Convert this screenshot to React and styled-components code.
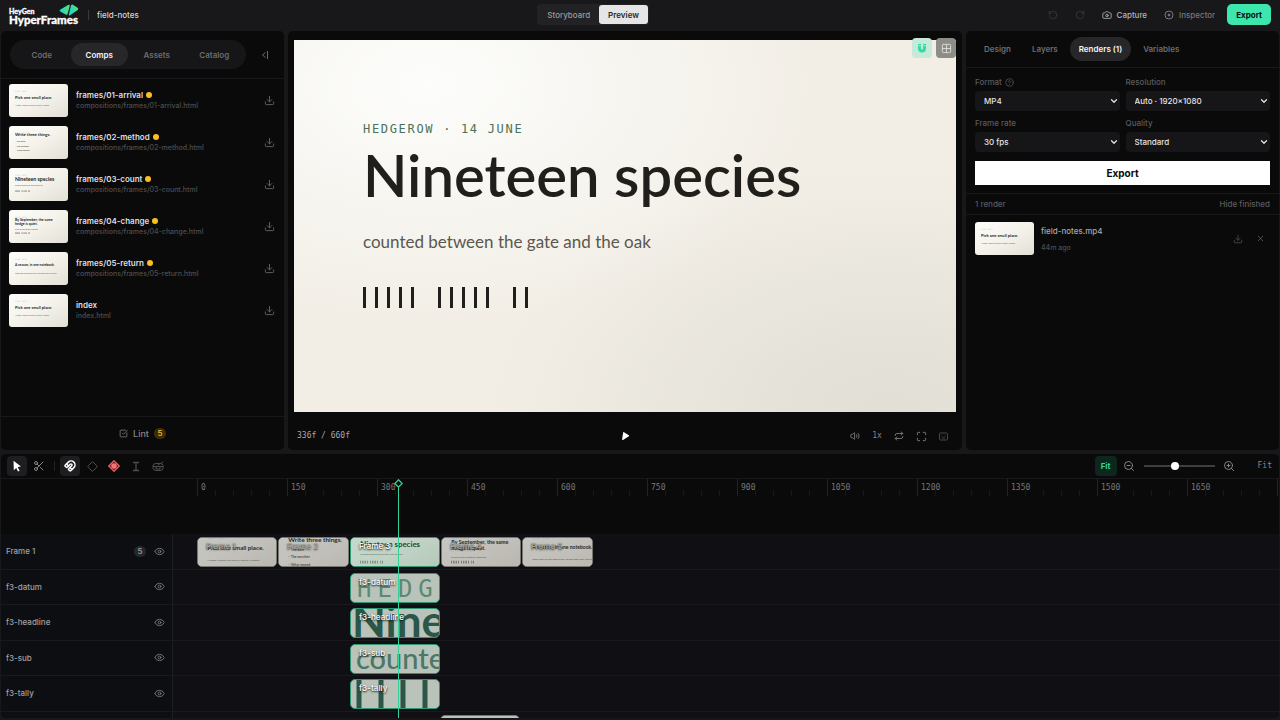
import React, {useState} from 'react'
import styled, {createGlobalStyle} from 'styled-components'
import {
    Camera, CircleHelp, ChevronDown, Download, X, Scissors, Magnet, Diamond,
    Volume2, Repeat, Maximize, Eye, ZoomIn, ZoomOut, RotateCcw, RotateCw, SquareCheckBig, Grid2x2
} from 'lucide-react'

const GlobalStyle = createGlobalStyle`
  * { box-sizing: border-box; }
  body {
    margin: 0;
    background: #18181a;
    color: #d4d4d8;
    font: 500 8px/12px Inter, "Liberation Sans", sans-serif;
  }
  button, select, input { font: inherit; color: inherit; }
  button { border: 0; padding: 0; background: none; cursor: pointer; }
  svg { display: block; flex-shrink: 0; }
`

const MONO = '"DejaVu Sans Mono", "Liberation Mono", monospace'
const FRAME_PX = 0.6

const Page = styled.div`
  display: flex;
  flex-direction: column;
  height: 100vh;
  padding: 0 1px 2px;
  overflow: hidden;
`
const Header = styled.header`
  display: flex;
  justify-content: space-between;
  align-items: center;
  height: 31px;
  flex-shrink: 0;
  padding: 0 8px 2px 7px;
`
const HeaderGroup = styled.div`
  display: flex;
  align-items: center;
  gap: ${p => p.$gap}px;
`
const Rule = styled.span`
  width: 1px;
  height: 10px;
  background: #3a3a3d;
`
const ToolRule = styled(Rule)`
  margin: 0 3px;
  background: #232326;
`
const Switch = styled.div`
  display: flex;
  padding: 1px;
  border-radius: 4px;
  background: #222224;
`
const SwitchButton = styled.button`
  height: 19px;
  padding: 0 9px;
  border-radius: 3px;
  font-weight: ${p => p.$active ? 600 : 500};
  color: ${p => p.$active ? '#27272a' : '#9a9a9f'};
  background: ${p => p.$active ? '#e5e5e5' : 'transparent'};
`
const HeaderAction = styled.button`
  display: flex;
  align-items: center;
  gap: 5px;
  color: ${p => p.$color};
`
const ExportButton = styled.button`
  height: 21px;
  padding: 0 9px;
  border-radius: 5px;
  background: #3ce6ac;
  color: #0a0a0a;
  font-weight: 700;
`
const Workspace = styled.main`
  display: flex;
  flex: 1;
  min-height: 0;
  gap: 4px;
`
const Panel = styled.section`
  display: flex;
  flex-direction: column;
  width: ${p => p.$width || 'auto'};
  flex: ${p => p.$width ? 'none' : 1};
  min-width: 0;
  border-radius: 5px;
  background: #0a0a0a;
  overflow: hidden;
`
const TabBar = styled.div`
  display: flex;
  align-items: center;
  flex-shrink: 0;
  height: ${p => p.$h}px;
  padding: 0 9px;
  gap: ${p => p.$gap || 0}px;
  border-bottom: 1px solid #18181b;
`
const Pills = styled.div`
  display: grid;
  grid-template-columns: repeat(4, 1fr);
  flex: 1;
  padding: 3px;
  border-radius: 15px;
  background: #161618;
`
const Tab = styled.button`
  height: ${p => p.$h || 23}px;
  padding: 0 ${p => p.$pad || 0}px;
  border-radius: 12px;
  font-weight: 600;
  color: ${p => p.$active ? '#f4f4f5' : '#6c6c71'};
  background: ${p => p.$active ? '#27272a' : 'transparent'};
`
const IconButton = styled.button`
  display: grid;
  place-items: center;
  width: 20px;
  height: 20px;
  border-radius: 4px;
  color: ${p => p.$color || '#66666b'};
  background: ${p => p.$bg || 'transparent'};
`
const CompList = styled.ul`
  flex: 1;
  margin: 0;
  padding: 0;
  list-style: none;
`
const CompRow = styled.li`
  display: flex;
  align-items: center;
  gap: 8px;
  height: 42px;
  padding: 0 5px 0 8px;
`
const Thumb = styled.svg`
  width: 59px;
  height: 33px;
  border-radius: 3px;
`
const CompText = styled.div`
  flex: 1;
  min-width: 0;
`
const CompName = styled.div`
  display: flex;
  align-items: center;
  gap: 3px;
  font-weight: 600;
  color: #dedee1;
`
const Dot = styled.span`
  width: 6px;
  height: 6px;
  border-radius: 50%;
  background: #fbbf24;
`
const Faint = styled.div`
  font-size: 7px;
  line-height: 10px;
  color: #4c4c50;
`
const LintBar = styled.footer`
  display: flex;
  justify-content: center;
  align-items: center;
  height: 34px;
  border-top: 1px solid #18181b;
`
const LintButton = styled.button`
  display: flex;
  align-items: center;
  gap: 5px;
  font-size: 9px;
  color: #85858a;
`
const Count = styled.span`
  width: 12px;
  border-radius: 6px;
  font-size: 8px;
  line-height: 11px;
  text-align: center;
  color: ${p => p.$warn ? '#fbbf24' : '#a1a1a6'};
  background: ${p => p.$warn ? '#3f2c0b' : '#27272a'};
`
const Stage = styled.div`
  position: relative;
  flex: 1;
  margin: 9px 6px 0;
  padding: 82px 69px 0;
  background:
    radial-gradient(ellipse 60% 65% at 20% 12%, #fdfdfc 0%, rgba(250, 250, 247, 0.8) 35%, transparent 100%),
    radial-gradient(ellipse 60% 65% at 90% 100%, #e1dfd6 0%, #e5e2da 30%, transparent 100%),
    #f2eee6;
  color: #211f1b;
`
const StageTools = styled.div`
  position: absolute;
  top: -2px;
  right: 0;
  display: flex;
  gap: 4px;
`
const Datum = styled.p`
  margin: 0;
  font: 400 12px/14px ${MONO};
  letter-spacing: 0.14em;
  color: #4b7259;
`
const Headline = styled.h1`
  margin: 4px 0 0;
  font: 600 58px/70px Lato, sans-serif;
`
const Sub = styled.p`
  margin: 22px 0 0;
  font: 400 17px/20px Lato, sans-serif;
  color: #5b574f;
`
const Tally = styled.div`
  display: flex;
  gap: 24px;
  margin-top: 35px;
`
const TallyGroup = styled.div`
  display: flex;
  gap: 9px;
`
const TallyMark = styled.span`
  width: 3px;
  height: 21px;
  background: #211f1b;
`
const Transport = styled.div`
  display: grid;
  grid-template-columns: 1fr auto 1fr;
  align-items: center;
  height: 38px;
  padding: 10px 9px 0 9px;
`
const Timecode = styled.span`
  font: 400 8px/12px ${MONO};
  color: ${p => p.$dim ? '#85858a' : '#a8a8ad'};
`
const IconRow = styled.div`
  display: flex;
  justify-content: flex-end;
  gap: 2px;
`
const Form = styled.form`
  display: grid;
  grid-template-columns: 1fr 1fr;
  gap: 7px 6px;
  padding: 9px 9px 8px;
  border-bottom: 1px solid #18181b;
`
const Field = styled.label`
  display: grid;
  gap: 4px;
  color: #5a5a5f;
`
const FieldName = styled.span`
  display: flex;
  align-items: center;
  gap: 3px;
  height: 10px;
`
const SelectBox = styled.span`
  display: grid;
  align-items: center;
  color: #e4e4e7;

  select, svg { grid-area: 1 / 1; }
  svg { justify-self: end; margin-right: 1px; pointer-events: none; }
  select {
    appearance: none;
    width: 100%;
    height: 20px;
    padding: 0 9px;
    border: 0;
    border-radius: 4px;
    background: #161618;
  }
`
const WideExport = styled.button`
  grid-column: 1 / -1;
  height: 24px;
  margin-top: 2px;
  background: #fff;
  color: #0a0a0a;
  font-size: 10px;
  font-weight: 700;
`
const RenderHead = styled.div`
  display: flex;
  align-items: center;
  justify-content: space-between;
  height: 21px;
  padding: 0 9px;
  border-bottom: 1px solid #18181b;
  color: #5a5a5f;
`
const RenderRow = styled.div`
  display: flex;
  align-items: center;
  gap: 7px;
  padding: 7px 9px;
`
const RenderText = styled.div`
  display: grid;
  gap: 6px;
  flex: 1;
  color: #a8a8ad;
`
const TimelinePanel = styled.section`
  display: flex;
  flex-direction: column;
  height: 264px;
  flex-shrink: 0;
  margin-top: 4px;
  border-radius: 5px;
  background: #0a0a0a;
  overflow: hidden;
`
const Toolbar = styled.div`
  display: flex;
  align-items: center;
  gap: 2px;
  height: 25px;
  flex-shrink: 0;
  padding: 0 7px 0 6px;
  border-bottom: 1px solid #18181b;
`
const Spacer = styled.span`
  flex: 1;
`
const FitButton = styled.button`
  width: 22px;
  height: 20px;
  border-radius: 4px;
  background: #0d261e;
  color: #34d399;
  font-weight: 700;
`
const ZoomSlider = styled.input`
  appearance: none;
  width: 71px;
  height: 8px;
  margin: 0 2px 0 3px;
  background: linear-gradient(#3f3f43, #3f3f43) center / 100% 2px no-repeat;

  &::-webkit-slider-thumb {
    appearance: none;
    width: 8px;
    height: 8px;
    border-radius: 50%;
    background: #fff;
  }
`
const ZoomLabel = styled.span`
  margin-left: 17px;
  font: 400 8px/12px ${MONO};
  color: #85858a;
`
const TimelineBody = styled.div`
  position: relative;
  flex: 1;
  min-height: 0;
`
const Ruler = styled.div`
  display: flex;
  height: 55px;
  padding-left: 196px;
  overflow: hidden;
`
const RulerCell = styled.div`
  width: 90px;
  height: 17px;
  flex-shrink: 0;
  padding: 4px 0 0 3px;
  border-left: 1px solid #232326;
  background: repeating-linear-gradient(90deg, transparent 0 17px, #171719 17px 18px) 0 100% / 100% 6px no-repeat;
  font: 400 8px/10px ${MONO};
  color: #77777c;
`
const Tracks = styled.div`
  display: grid;
  grid-template-rows: repeat(6, 1fr);
  height: 213px;
`
const Track = styled.div`
  display: grid;
  grid-template-columns: 172px 1fr;
  border-bottom: 1px solid #1a1a1e;
  background: #101014;
  min-height: 0;
`
const TrackLabel = styled.div`
  display: flex;
  align-items: center;
  gap: 3px;
  padding: 0 3px 0 5px;
  border-right: 1px solid #1e1e22;
  background: #0d0e11;
  color: #a1a1a6;
`
const TrackName = styled.span`
  flex: 1;
`
const Lane = styled.div`
  display: flex;
  gap: 1px;
  padding: 3px 0 1px 24px;
  overflow: hidden;
`
const ClipBox = styled.div`
  display: grid;
  grid-template-columns: 100%;
  height: 30px;
  flex-shrink: 0;
  border-radius: 5px;
  border: 1px solid ${p => p.$live ? '#2f9873' : '#77766f'};
  overflow: hidden;
  background: #b9c3b9;

  > * { grid-area: 1 / 1; }
  > svg { width: 90px; height: 28px; border-radius: 0; }
`
const ClipTint = styled.span`
  height: 28px;
  z-index: 0;
  background: ${p => p.$live ? 'rgba(70, 140, 110, 0.3)' : 'rgba(60, 60, 58, 0.28)'};
`
const ClipLabel = styled.span`
  z-index: 1;
  padding: 2px 0 0 8px;
  font-weight: 600;
  white-space: nowrap;
  color: ${p => p.$live ? '#f4f4f5' : '#a3a29b'};
  text-shadow: 0 1px 2px ${p => p.$live ? '#000' : '#33322f'};
`
const Playhead = styled.div`
  position: absolute;
  z-index: 2;
  top: 0;
  bottom: 0;
  width: 9px;
  pointer-events: none;
`
const PlayheadLine = styled.div`
  width: 1px;
  height: 100%;
  margin-left: 4px;
  background: #34d399;
`

// simple drawings

const Logo = () => (
    <svg width="72" height="24" viewBox="0 0 72 24" role="img" aria-label="HeyGen HyperFrames">
        <defs>
            <linearGradient id="mark" x1="0" y1="0" x2="1" y2="0">
                <stop offset="0" stopColor="#1ad1e0" />
                <stop offset="1" stopColor="#5be36a" />
            </linearGradient>
        </defs>
        <g fill="#fff" stroke="#fff" strokeWidth="0.300" fontFamily="Lato" fontWeight="900">
            <text x="1" y="11" fontSize="7">HeyGen</text>
            <text x="1" y="21" fontSize="11.500">HyperFrames</text>
        </g>
        <path d="M52 6.800 L60 2 Q62 1 61.700 3 L59.700 10.500 Q59.200 12.200 57.700 11.500 L52.300 8.500 Q51 7.600 52 6.800Z" fill="url(#mark)" />
        <path d="M63 2.500 Q63.500 1 65 1.700 L69.500 4.800 Q71 6 69.700 7 L62 12.300 Q60.500 13 60.800 11.500Z" fill="url(#mark)" />
    </svg>
)

const CollapseIcon = () => (
    <svg width="9" height="10" viewBox="0 0 9 10" fill="none" stroke="currentColor">
        <path d="M4.500 2.500 L1.500 5 L4.500 7.500 M6.500 1 V9" />
    </svg>
)
const PointerIcon = () => (
    <svg width="12" height="12" viewBox="0 0 12 12" fill="currentColor">
        <path d="M2.500 0.800 L10 6.600 L6.700 7.100 L8.600 10.700 L7 11.500 L5.200 7.900 L2.800 10.200Z" />
    </svg>
)
const RecordIcon = () => (
    <svg width="12" height="12" viewBox="0 0 12 12">
        <path d="M6 0.700 L11.300 6 L6 11.300 L0.700 6Z" fill="#5c2022" stroke="#ef6262" strokeWidth="1.200" strokeLinejoin="round" />
        <circle cx="6" cy="6" r="2.800" fill="#f87171" />
    </svg>
)
const BeamIcon = () => (
    <svg width="10" height="11" viewBox="0 0 10 11" fill="none" stroke="currentColor" strokeWidth="1.300">
        <path d="M2 1.500 H8 M5 1.500 V9.500 M2 9.500 H8" />
    </svg>
)
const DrumIcon = () => (
    <svg width="12" height="11" viewBox="0 0 12 11" fill="none" stroke="currentColor" strokeLinecap="round">
        <path d="M1 4.500 Q1 2.500 4 2.500 H8 Q11 2.500 11 4.500 V7 Q11 9.500 8 9.500 H4 Q1 9.500 1 7Z M1 5.500 H11 M4 5.500 V8 H8 V5.500 M6 4 L11 1" />
    </svg>
)
const SnapIcon = () => (
    <svg width="10" height="11" viewBox="0 0 10 11" fill="none">
        <path d="M2.500 1 V5.500 A2.500 2.500 0 0 0 7.500 5.500 V1" stroke="#34dba0" strokeWidth="3" />
        <path d="M1 2.700 H4 M6 2.700 H9" stroke="#c9ecdc" strokeWidth="0.700" />
    </svg>
)
const InspectIcon = () => (
    <svg width="10" height="10" viewBox="0 0 10 10" fill="none" stroke="currentColor">
        <circle cx="5" cy="5" r="4" />
        <circle cx="5" cy="5" r="1" fill="currentColor" />
    </svg>
)
const PlayIcon = () => (
    <svg width="9" height="10" viewBox="0 0 9 10" fill="#fff">
        <path d="M2.200 1.200 Q2.500 0.800 3 1.200 L7.900 4.300 Q8.400 4.700 7.900 5.300 L2 9 Q1 9.200 1.100 8.200Z" />
    </svg>
)
const CaptionIcon = () => (
    <svg width="9" height="9" viewBox="0 0 9 9" fill="none" stroke="currentColor">
        <rect x="0.500" y="1" width="8" height="7" rx="1" />
        <path d="M2.500 4 H3.500 M5.500 4 H6.500 M3 6 H6" />
    </svg>
)

// slide miniatures on a 320x180 board
const SLIDES = {
    pick: {title: ['Pick one small place.'], y: 82, size: 22, small: [[122, 'A hedge, a bench, the end of a street, a window.']]},
    write: {title: ['Write three things.'], y: 54, size: 23, small: [[88, '–   The date'], [113, '–   The weather'], [138, '–   What moved']], list: true},
    count: {title: ['Nineteen species'], y: 73, size: 28, small: [[99, 'counted between the gate and the oak']], marks: true},
    change: {title: ['By September, the same', 'hedge is quiet.'], y: 62, size: 19, small: [[111, 'seven of the nineteen remained']], marks: true},
    season: {title: ['A season, in one notebook.'], y: 78, size: 18, small: [[118, 'Come back to the same place, at the same hour, and write.']]}
}

const Slide = ({name}) => {
    const s = SLIDES[name]
    return (
        <Thumb viewBox="0 0 320 180" preserveAspectRatio="xMidYMid slice">
            <defs>
                <linearGradient id="paper" x1="0" y1="0" x2="1" y2="1">
                    <stop offset="0" stopColor="#fdfdfb" />
                    <stop offset="0.500" stopColor="#f5f2eb" />
                    <stop offset="1" stopColor="#e2e0d6" />
                </linearGradient>
            </defs>
            <rect width="320" height="180" fill="url(#paper)" />
            <path d="M34 40 H62 M70 40 H98" stroke="#b9c4b8" strokeWidth="3" strokeDasharray="5 2" />
            {s.title.map((line, i) => (
                <text key={line} x="33" y={s.y + i * 20} fontFamily="Lato" fontWeight="700" fontSize={s.size} fill="#211f1b">{line}</text>
            ))}
            {s.small.map(([y, line]) => (
                <text key={line} x="33" y={y} fontFamily="Lato" fontWeight={s.list ? 700 : 400} fontSize={s.list ? 12 : 9} fill="#5b574f">{line}</text>
            ))}
            {s.marks && <path d="M33 126 H115" stroke="#4a4741" strokeWidth="9" strokeDasharray="2 4 2 4 2 4 2 4 2 10" />}
        </Thumb>
    )
}

// enlarged cut-outs of the selected frame's elements
const ART = {
    datum: <text x="6" y="23" fontFamily="DejaVu Sans Mono" fontSize="24" letterSpacing="6" fill="#5a8a72">HEDG</text>,
    headline: <text x="1" y="28" fontFamily="Lato" fontWeight="700" fontSize="44" fill="#2c5648">Nine</text>,
    sub: <text x="5" y="24" fontFamily="Lato" fontSize="29" fill="#4b7767">counted</text>,
    tally: <path d="M8 0 V28 M30 0 V28 M52 0 V28 M74 0 V28" stroke="#2c5648" strokeWidth="5" />
}

const COMPS = [
    {name: 'frames/01-arrival', path: 'compositions/frames/01-arrival.html', slide: 'pick', dirty: true},
    {name: 'frames/02-method', path: 'compositions/frames/02-method.html', slide: 'write', dirty: true},
    {name: 'frames/03-count', path: 'compositions/frames/03-count.html', slide: 'count', dirty: true},
    {name: 'frames/04-change', path: 'compositions/frames/04-change.html', slide: 'change', dirty: true},
    {name: 'frames/05-return', path: 'compositions/frames/05-return.html', slide: 'season', dirty: true},
    {name: 'index', path: 'index.html', slide: 'pick'}
]

const TRACKS = [
    {name: 'Frame 1', count: 5, clips: [
        {label: 'Frame 1', frames: 135, slide: 'pick'},
        {label: 'Frame 2', frames: 120, slide: 'write'},
        {label: 'Frame 3', frames: 150, slide: 'count', live: true},
        {label: 'Frame 4', frames: 135, slide: 'change'},
        {label: 'Frame 5', frames: 120, slide: 'season'}
    ]},
    {name: 'f3-datum', start: 255, clips: [{label: 'f3-datum', frames: 150, art: 'datum', live: true}]},
    {name: 'f3-headline', start: 255, clips: [{label: 'f3-headline', frames: 150, art: 'headline', live: true}]},
    {name: 'f3-sub', start: 255, clips: [{label: 'f3-sub', frames: 150, art: 'sub', live: true}]},
    {name: 'f3-tally', start: 255, clips: [{label: 'f3-tally', frames: 150, art: 'tally', live: true}]},
    {name: '', start: 405, clips: [{label: '', frames: 135}]}
]

const FIELDS = [
    {label: 'Format', value: 'MP4', help: true},
    {label: 'Resolution', value: 'Auto · 1920×1080'},
    {label: 'Frame rate', value: '30 fps'},
    {label: 'Quality', value: 'Standard'}
]

const Sidebar = () => {
    const [tab, setTab] = useState('Comps')
    return (
        <Panel $width="283px">
            <TabBar $h={48} $gap={9}>
                <Pills>
                    {['Code', 'Comps', 'Assets', 'Catalog'].map(t => (
                        <Tab key={t} $active={t === tab} onClick={() => setTab(t)}>{t}</Tab>
                    ))}
                </Pills>
                <IconButton aria-label="Collapse"><CollapseIcon /></IconButton>
            </TabBar>
            <CompList>
                {COMPS.map(c => (
                    <CompRow key={c.name}>
                        <Slide name={c.slide} />
                        <CompText>
                            <CompName>{c.name}{c.dirty && <Dot />}</CompName>
                            <Faint>{c.path}</Faint>
                        </CompText>
                        <IconButton aria-label="Download"><Download size={11} strokeWidth={2} /></IconButton>
                    </CompRow>
                ))}
            </CompList>
            <LintBar>
                <LintButton><SquareCheckBig size={9} />Lint <Count $warn>5</Count></LintButton>
            </LintBar>
        </Panel>
    )
}

const Preview = () => (
    <Panel>
        <Stage>
            <StageTools>
                <IconButton aria-label="Snap" $bg="#c5e9da"><SnapIcon /></IconButton>
                <IconButton aria-label="Grid" $bg="#8d8c87" $color="#dcdbd6"><Grid2x2 size={11} /></IconButton>
            </StageTools>
            <Datum>HEDGEROW · 14 JUNE</Datum>
            <Headline>Nineteen species</Headline>
            <Sub>counted between the gate and the oak</Sub>
            <Tally>
                {[5, 5, 2].map((n, g) => (
                    <TallyGroup key={g}>
                        {Array.from({length: n}, (_, i) => <TallyMark key={i} />)}
                    </TallyGroup>
                ))}
            </Tally>
        </Stage>
        <Transport>
            <Timecode>336f / 660f</Timecode>
            <IconButton aria-label="Play"><PlayIcon /></IconButton>
            <IconRow>
                <IconButton aria-label="Volume" $color="#85858a"><Volume2 size={10} /></IconButton>
                <IconButton><Timecode $dim>1x</Timecode></IconButton>
                <IconButton aria-label="Loop" $color="#85858a"><Repeat size={10} /></IconButton>
                <IconButton aria-label="Fullscreen" $color="#85858a"><Maximize size={11} /></IconButton>
                <IconButton aria-label="Captions" $color="#47474b"><CaptionIcon /></IconButton>
            </IconRow>
        </Transport>
    </Panel>
)

const Inspector = () => {
    const [tab, setTab] = useState('Renders (1)')
    return (
        <Panel $width="313px">
            <TabBar $h={37} $gap={3}>
                {['Design', 'Layers', 'Renders (1)', 'Variables'].map(t => (
                    <Tab key={t} $h={24} $pad={9} $active={t === tab} onClick={() => setTab(t)}>{t}</Tab>
                ))}
            </TabBar>
            <Form onSubmit={e => e.preventDefault()}>
                {FIELDS.map(f => (
                    <Field key={f.label}>
                        <FieldName>{f.label}{f.help && <CircleHelp size={9} />}</FieldName>
                        <SelectBox>
                            <select defaultValue={f.value}><option>{f.value}</option></select>
                            <ChevronDown size={10} strokeWidth={3} />
                        </SelectBox>
                    </Field>
                ))}
                <WideExport>Export</WideExport>
            </Form>
            <RenderHead><span>1 render</span><button>Hide finished</button></RenderHead>
            <RenderRow>
                <Slide name="pick" />
                <RenderText>
                    <span>field-notes.mp4</span>
                    <Faint>44m ago</Faint>
                </RenderText>
                <IconRow>
                    <IconButton aria-label="Download" $color="#4c4c50"><Download size={10} /></IconButton>
                    <IconButton aria-label="Remove"><X size={9} /></IconButton>
                </IconRow>
            </RenderRow>
        </Panel>
    )
}

const Clip = ({clip}) => (
    <ClipBox $live={clip.live} style={{width: clip.frames * FRAME_PX - (clip.live ? 0 : 1)}}>
        {clip.slide && <Slide name={clip.slide} />}
        {clip.art && <svg>{ART[clip.art]}</svg>}
        {clip.slide && <ClipTint $live={clip.live} />}
        <ClipLabel $live={clip.live}>{clip.label}</ClipLabel>
    </ClipBox>
)

const Timeline = () => (
    <TimelinePanel>
        <Toolbar>
            <IconButton aria-label="Select" $bg="#1e1e20" $color="#fff"><PointerIcon /></IconButton>
            <IconButton aria-label="Cut" $color="#85858a"><Scissors size={12} /></IconButton>
            <ToolRule />
            <IconButton aria-label="Snap" $bg="#1e1e20" $color="#fff"><Magnet size={12} strokeWidth={3} /></IconButton>
            <IconButton aria-label="Keyframe" $color="#5a5a5f"><Diamond size={11} /></IconButton>
            <IconButton aria-label="Record"><RecordIcon /></IconButton>
            <IconButton aria-label="Beam" $color="#4c4c50"><BeamIcon /></IconButton>
            <IconButton aria-label="Beats" $color="#4c4c50"><DrumIcon /></IconButton>
            <Spacer />
            <FitButton>Fit</FitButton>
            <IconButton aria-label="Zoom out" $color="#85858a"><ZoomOut size={12} /></IconButton>
            <ZoomSlider type="range" aria-label="Zoom" defaultValue="43" />
            <IconButton aria-label="Zoom in" $color="#85858a"><ZoomIn size={12} /></IconButton>
            <ZoomLabel>Fit</ZoomLabel>
        </Toolbar>
        <TimelineBody>
            <Ruler>
                {Array.from({length: 13}, (_, i) => (
                    <RulerCell key={i}>{i < 12 ? i * 150 : ''}</RulerCell>
                ))}
            </Ruler>
            <Tracks>
                {TRACKS.map((t, i) => (
                    <Track key={i}>
                        <TrackLabel>
                            <TrackName>{t.name}</TrackName>
                            {t.count && <Count>{t.count}</Count>}
                            {t.name && <IconButton aria-label={'Toggle ' + t.name} $color="#77777c"><Eye size={11} /></IconButton>}
                        </TrackLabel>
                        <Lane>
                            {t.start && <span style={{width: t.start * FRAME_PX - 1}} />}
                            {t.clips.map(c => <Clip key={c.label} clip={c} />)}
                        </Lane>
                    </Track>
                ))}
            </Tracks>
            <Playhead style={{left: 191 + Math.round(336 * FRAME_PX)}}>
                <svg width="9" height="9" viewBox="0 0 9 9" fill="#0a0a0a" stroke="#34d399" strokeWidth="1.300">
                    <path d="M4.500 0.800 L8.200 4.500 L4.500 8.200 L0.800 4.500Z" />
                </svg>
                <PlayheadLine />
            </Playhead>
        </TimelineBody>
    </TimelinePanel>
)

const App = () => {
    return (
        <Page>
            <GlobalStyle />
            <Header>
                <HeaderGroup $gap={8}>
                    <Logo />
                    <Rule />
                    <span>field-notes</span>
                </HeaderGroup>
                <Switch>
                    <SwitchButton>Storyboard</SwitchButton>
                    <SwitchButton $active>Preview</SwitchButton>
                </Switch>
                <HeaderGroup $gap={12}>
                    <HeaderGroup $gap={17}>
                        <HeaderAction $color="#3a3a3d" aria-label="Undo"><RotateCcw size={10} /></HeaderAction>
                        <HeaderAction $color="#3a3a3d" aria-label="Redo"><RotateCw size={10} /></HeaderAction>
                        <HeaderAction $color="#b4b4b8"><Camera size={10} />Capture</HeaderAction>
                        <HeaderAction $color="#77777c"><InspectIcon />Inspector</HeaderAction>
                    </HeaderGroup>
                    <ExportButton>Export</ExportButton>
                </HeaderGroup>
            </Header>
            <Workspace>
                <Sidebar />
                <Preview />
                <Inspector />
            </Workspace>
            <Timeline />
        </Page>
    )
}

export default App
